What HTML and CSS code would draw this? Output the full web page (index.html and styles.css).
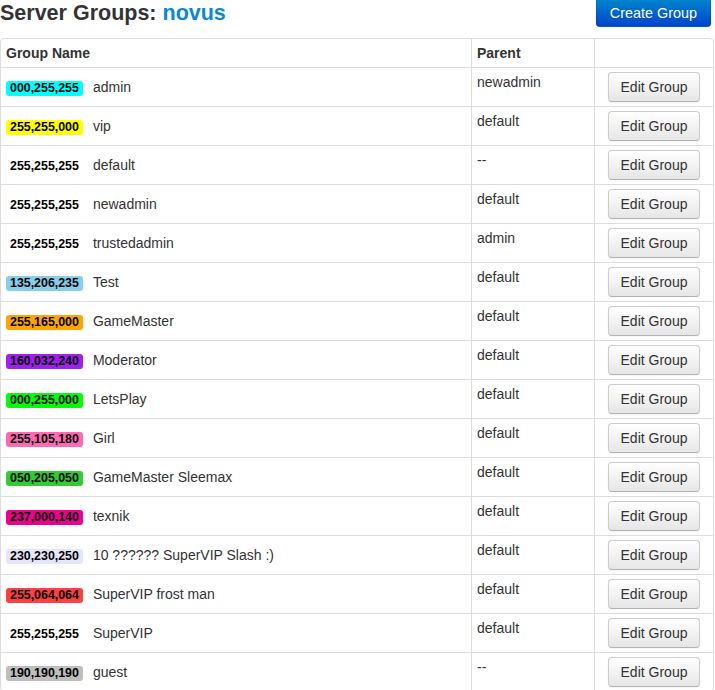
FILE: index.html
```html
<!DOCTYPE html>
<html>
<head>
<meta charset="utf-8">
<link rel="stylesheet" href="styles.css">
</head>
<body>
<div class="page">
  <div class="topbar">
    <h3 class="title">Server Groups: <span class="server">novus</span></h3>
    <button class="btn btn-primary create">Create Group</button>
  </div>
  <table class="groups">
    <thead>
      <tr><th class="c1">Group Name</th><th class="c2">Parent</th><th class="c3"></th></tr>
    </thead>
    <tbody>
      <tr><td class="name"><span class="label" style="background:rgb(0,255,255)">000,255,255</span>admin</td><td class="parent">newadmin</td><td class="act"><button class="btn">Edit Group</button></td></tr>
      <tr><td class="name"><span class="label" style="background:rgb(255,255,0)">255,255,000</span>vip</td><td class="parent">default</td><td class="act"><button class="btn">Edit Group</button></td></tr>
      <tr><td class="name"><span class="label" style="background:rgb(255,255,255)">255,255,255</span>default</td><td class="parent">--</td><td class="act"><button class="btn">Edit Group</button></td></tr>
      <tr><td class="name"><span class="label" style="background:rgb(255,255,255)">255,255,255</span>newadmin</td><td class="parent">default</td><td class="act"><button class="btn">Edit Group</button></td></tr>
      <tr><td class="name"><span class="label" style="background:rgb(255,255,255)">255,255,255</span>trustedadmin</td><td class="parent">admin</td><td class="act"><button class="btn">Edit Group</button></td></tr>
      <tr><td class="name"><span class="label" style="background:rgb(135,206,235)">135,206,235</span>Test</td><td class="parent">default</td><td class="act"><button class="btn">Edit Group</button></td></tr>
      <tr><td class="name"><span class="label" style="background:rgb(255,165,0)">255,165,000</span>GameMaster</td><td class="parent">default</td><td class="act"><button class="btn">Edit Group</button></td></tr>
      <tr><td class="name"><span class="label" style="background:rgb(160,32,240)">160,032,240</span>Moderator</td><td class="parent">default</td><td class="act"><button class="btn">Edit Group</button></td></tr>
      <tr><td class="name"><span class="label" style="background:rgb(0,255,0)">000,255,000</span>LetsPlay</td><td class="parent">default</td><td class="act"><button class="btn">Edit Group</button></td></tr>
      <tr><td class="name"><span class="label" style="background:rgb(255,105,180)">255,105,180</span>Girl</td><td class="parent">default</td><td class="act"><button class="btn">Edit Group</button></td></tr>
      <tr><td class="name"><span class="label" style="background:rgb(50,205,50)">050,205,050</span>GameMaster Sleemax</td><td class="parent">default</td><td class="act"><button class="btn">Edit Group</button></td></tr>
      <tr><td class="name"><span class="label" style="background:rgb(237,0,140)">237,000,140</span>texnik</td><td class="parent">default</td><td class="act"><button class="btn">Edit Group</button></td></tr>
      <tr><td class="name"><span class="label" style="background:rgb(230,230,250)">230,230,250</span>10 ?????? SuperVIP Slash :)</td><td class="parent">default</td><td class="act"><button class="btn">Edit Group</button></td></tr>
      <tr><td class="name"><span class="label" style="background:rgb(255,64,64)">255,064,064</span>SuperVIP frost man</td><td class="parent">default</td><td class="act"><button class="btn">Edit Group</button></td></tr>
      <tr><td class="name"><span class="label" style="background:rgb(255,255,255)">255,255,255</span>SuperVIP</td><td class="parent">default</td><td class="act"><button class="btn">Edit Group</button></td></tr>
      <tr><td class="name"><span class="label" style="background:rgb(190,190,190)">190,190,190</span>guest</td><td class="parent">--</td><td class="act"><button class="btn">Edit Group</button></td></tr>
    </tbody>
  </table>
</div>
</body>
</html>
```
FILE: styles.css
```css
html, body {
  margin: 0;
  padding: 0;
  background: #fff;
}
body {
  font-family: "Liberation Sans", Arial, sans-serif;
  font-size: 14px;
  line-height: 20px;
  color: #333;
}
.page {
  width: 714px;
}
.topbar {
  display: flex;
  justify-content: space-between;
  align-items: flex-start;
  height: 38px;
}
.title {
  margin: 0;
  font-size: 21.5px;
  line-height: 27px;
  font-weight: bold;
  color: #333;
}
.server {
  color: #0a88cf;
}
.btn {
  display: inline-block;
  box-sizing: border-box;
  height: 30px;
  padding: 4px 12px;
  font-family: "Liberation Sans", Arial, sans-serif;
  font-size: 14px;
  line-height: 20px;
  color: #333;
  text-align: center;
  white-space: nowrap;
  background-color: #f5f5f5;
  background-image: linear-gradient(to bottom, #ffffff, #e6e6e6);
  border: 1px solid #cccccc;
  border-bottom-color: #b3b3b3;
  border-radius: 4px;
  box-shadow: inset 0 1px 0 rgba(255,255,255,.2), 0 1px 2px rgba(0,0,0,.05);
  cursor: pointer;
}
.btn-primary {
  color: #fff;
  background-color: #006dcc;
  background-image: linear-gradient(to bottom, #0088cc, #0044cc);
  border-color: rgba(0,0,0,.1) rgba(0,0,0,.1) rgba(0,0,0,.25);
}
.create {
  flex-shrink: 0;
  margin-top: -3px;
  margin-right: 3px;
  padding: 5px 13px 3px;
  font-size: 14.4px;
}
.groups {
  width: 714px;
  box-sizing: border-box;
  table-layout: fixed;
  border-collapse: separate;
  border-spacing: 0;
  border: 1px solid #dddddd;
  border-radius: 4px;
}
.groups th,
.groups td {
  box-sizing: border-box;
  padding: 4px 5px;
  line-height: 20px;
  text-align: left;
  vertical-align: top;
  border-left: 1px solid #dddddd;
  border-top: 1px solid #dddddd;
}
.groups th:first-child,
.groups td:first-child {
  border-left: 0;
}
.groups thead th {
  border-top: 0;
  font-weight: bold;
}
.groups .c1 { width: 470px; }
.groups .c2 { width: 123px; }
.groups td.name {
  vertical-align: middle;
}
.groups td.act {
  text-align: center;
}
.label {
  display: inline-block;
  padding: 0 4px;
  margin-right: 10px;
  font-size: 12.4px;
  font-weight: bold;
  line-height: 15px;
  color: #000;
  border-radius: 3px;
}
```
